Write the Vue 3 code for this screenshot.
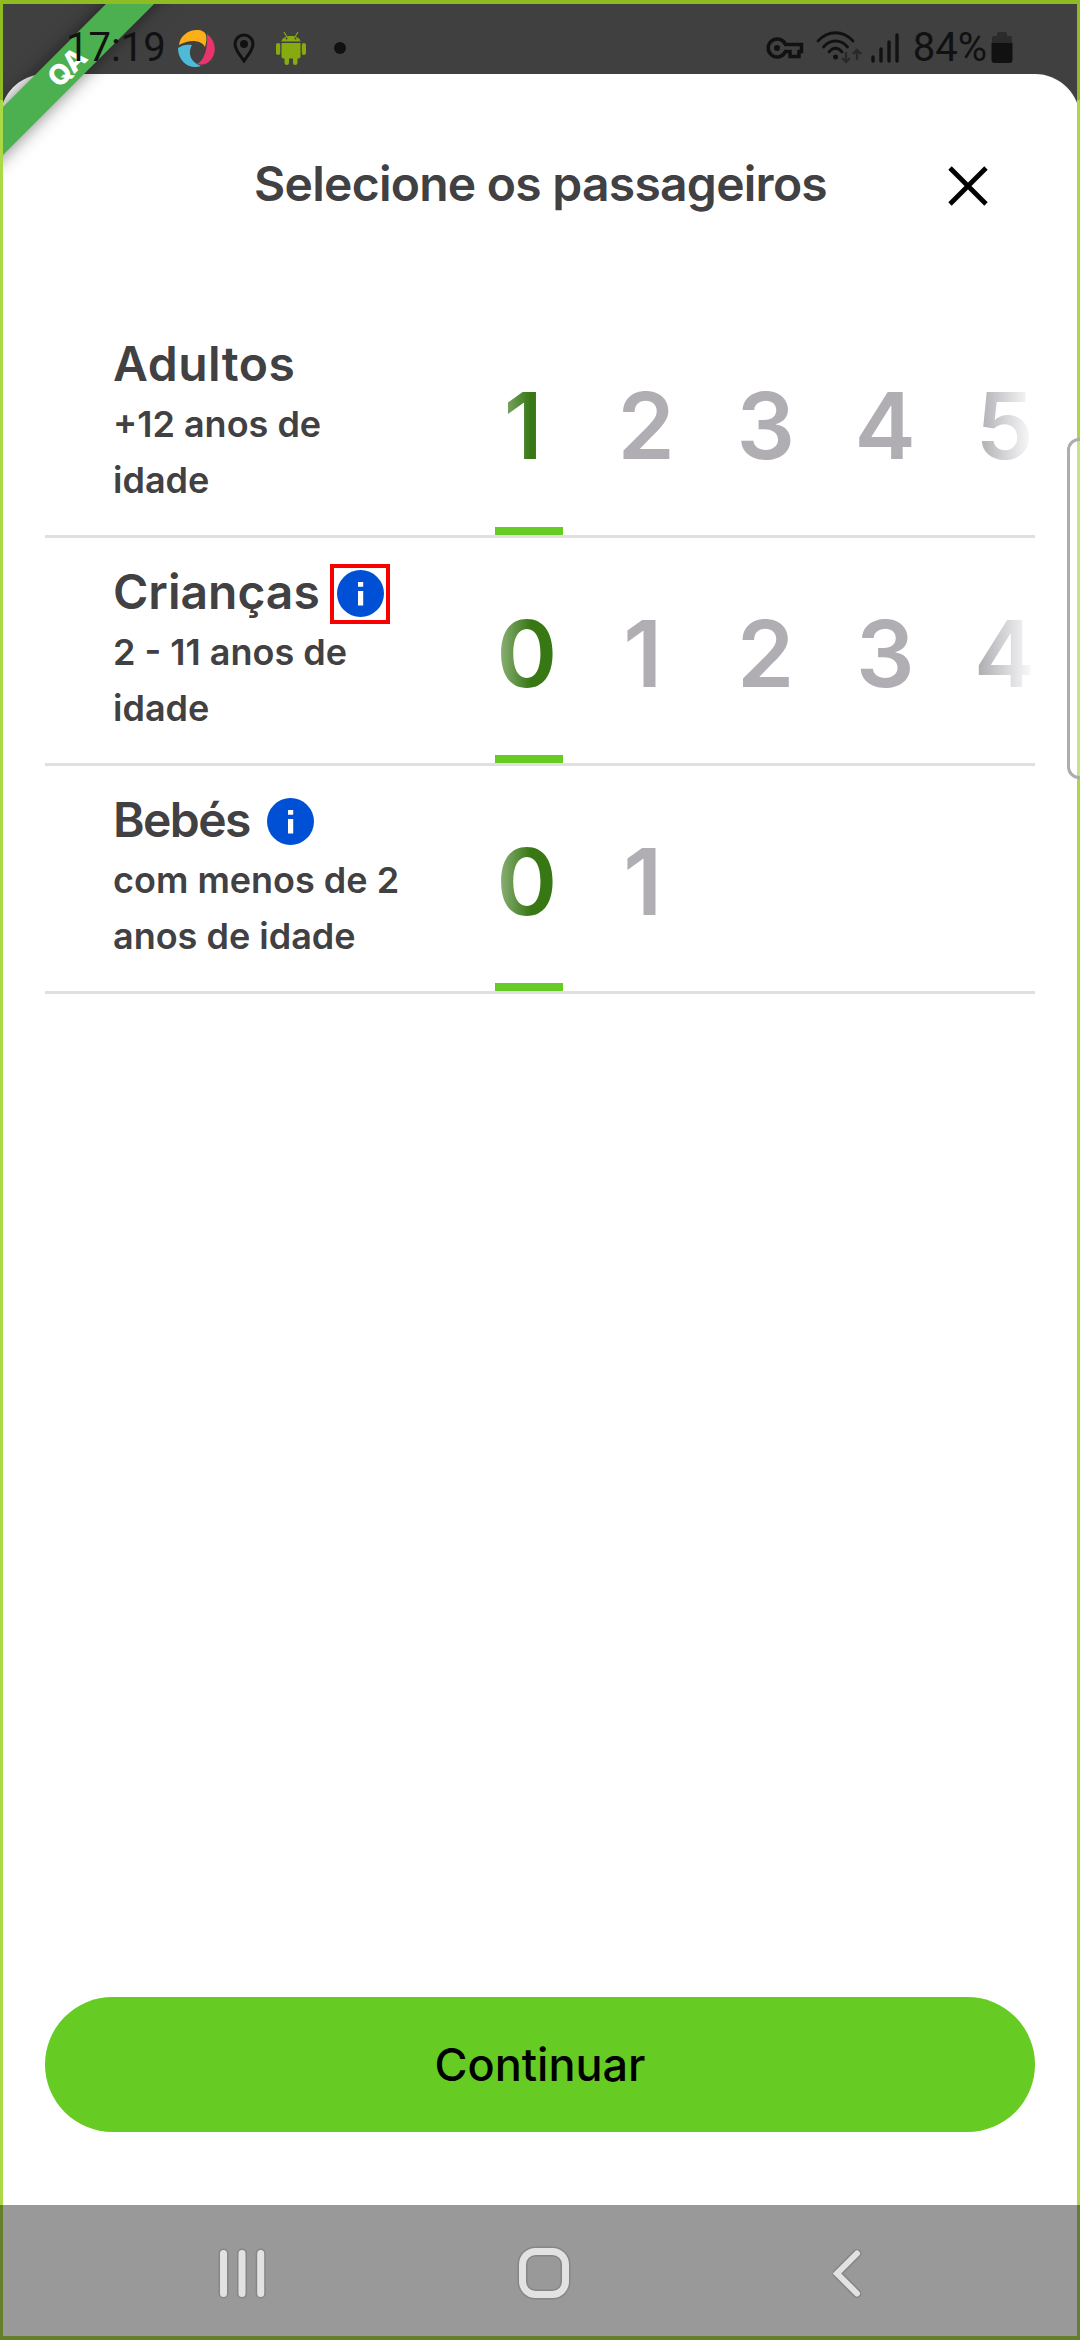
<script setup>
const rows = [
  { title: 'Adultos', lines: ['+12 anos de', 'idade'], info: false, marked: false, values: [1, 2, 3, 4, 5], key: 'adults' },
  { title: 'Crianças', lines: ['2 - 11 anos de', 'idade'], info: true, marked: true, values: [0, 1, 2, 3, 4], key: 'children' },
  { title: 'Bebés', lines: ['com menos de 2', 'anos de idade'], info: true, marked: false, values: [0, 1], key: 'babies' },
]
</script>

<template>
  <div class="screen">
    <div class="ribbon-clip"><div class="ribbon">QA</div></div>

    <div class="status">
      <div class="status-left">
        <span class="clock">17:19</span>
        <svg class="swirl" width="37" height="37" viewBox="0 0 37 37">
          <path d="M1 15C2 6 10 0 19 0c5 0 8 2 9 5 1 4 0 8-1 12C23 10 12 9 1 15z" fill="#fdaf17" />
          <path d="M29 4c7 5 9 13 7 20-3 9-10 12-17 10 7-4 11-14 10-30z" fill="#e8336d" />
          <path d="M0 18c4-3 9-4 14-3-4 7-3 16 9 21-11 4-23-4-23-18z" fill="#4fb9d8" />
        </svg>
        <svg class="pin" width="22" height="30" viewBox="0 0 22 30">
          <path d="M11 2C6 2 2 6 2 11c0 6 5 11 9 17 4-6 9-11 9-17 0-5-4-9-9-9z" fill="none" stroke="#111" stroke-width="3" />
          <circle cx="11" cy="11" r="4" fill="#111" />
        </svg>
        <svg class="droid" width="30" height="34" viewBox="0 0 30 34">
          <g fill="#86aa10">
            <path d="M5.500 10.500C6 3 24 3 24.500 10.500z" />
            <path d="M5.500 12h19v13.500a2 2 0 0 1-2 2h-15a2 2 0 0 1-2-2z" />
            <rect x="0" y="12" width="4.200" height="12" rx="2.100" />
            <rect x="25.800" y="12" width="4.200" height="12" rx="2.100" />
            <rect x="8.500" y="24" width="4.500" height="10" rx="2.200" />
            <rect x="17" y="24" width="4.500" height="10" rx="2.200" />
          </g>
          <path d="M8 1l3 5M22 1l-3 5" stroke="#86aa10" stroke-width="1.200" />
          <circle cx="10.500" cy="7.500" r="1" fill="#404040" /><circle cx="19.500" cy="7.500" r="1" fill="#404040" />
        </svg>
        <span class="dot"></span>
      </div>
      <div class="status-right">
        <svg class="key" width="38" height="22" viewBox="0 0 38 22">
          <path d="M19.500 7.500A9 9 0 1 0 19.500 14.500H24v5h9v-5h2.500v-7z" fill="none" stroke="#111" stroke-width="3.500" />
          <circle cx="11" cy="11" r="3" fill="#111" />
        </svg>
        <svg class="wifi" width="46" height="34" viewBox="0 0 46 34">
          <g fill="none" stroke="#111" stroke-width="2.800" stroke-linecap="round">
            <path d="M2 10C12-1 27-1 37 10" /><path d="M7.500 16C14 8 25 8 31.500 16" /><path d="M13 21C17 16 22 16 26 21" />
          </g>
          <circle cx="19.500" cy="26" r="2.500" fill="#111" />
          <path d="M30 21v10m-4-4l4 4 4-4M41 29V19m-4 4l4-4 4 4" fill="none" stroke="#292929" stroke-width="2.400" />
        </svg>
        <svg class="bars" width="28" height="30" viewBox="0 0 28 30">
          <path d="M2 24v4M10 16v12M18 9v19M26 2v26" stroke="#111" stroke-width="3.400" stroke-linecap="round" />
        </svg>
        <span class="percent">84%</span>
        <svg class="battery" width="22" height="32" viewBox="0 0 22 32">
          <path d="M1 11V6q0-2 2-2h3V2q0-2 2-2h6q2 0 2 2v2h3q2 0 2 2v5z" fill="#2b2b2b" />
          <path d="M.5 11h21v17q0 3-3 3h-15q-3 0-3-3z" fill="#111" />
        </svg>
      </div>
    </div>

    <main class="sheet">
      <header class="head">
        <h1>Selecione os passageiros</h1>
        <svg class="close" width="40" height="40" viewBox="0 0 40 40"><path d="M2 2l36 36M38 2L2 38" stroke="#000" stroke-width="4.800" /></svg>
      </header>

      <section v-for="row in rows" :key="row.key" class="row">
        <div class="label">
          <div class="name">
            <span :class="['word', row.key]">{{ row.title }}</span>
            <span v-if="row.info" :class="['info-box', { marked: row.marked }]">
              <svg width="47" height="47" viewBox="0 0 47 47">
                <circle cx="23.500" cy="23.500" r="23.500" fill="#0050d5" />
                <path d="M21 12h5.200v4.800H21zM21 21h5.200v14.500H21z" fill="#fff" />
              </svg>
            </span>
          </div>
          <div v-for="line in row.lines" :key="line" class="sub">{{ line }}</div>
        </div>
        <div class="picker">
          <div class="values">
            <span v-for="(v, i) in row.values" :key="v" :class="['value', { on: i === 0, one: v === 1 }]">{{ v }}</span>
          </div>
          <div class="bar"></div>
        </div>
      </section>

      <button class="go">Continuar</button>
    </main>

    <nav class="nav">
      <svg width="1080" height="135" viewBox="0 0 1080 135">
        <g fill="none" stroke-linecap="round" stroke-linejoin="round">
          <g stroke="#868686" stroke-width="10">
            <path d="M223.500 48.500v40M242 48.500v40M260.700 48.500v40" />
            <rect x="522.500" y="46.500" width="43" height="43" rx="13" />
            <path d="M857 48.500l-20 20 20 20" stroke-width="9" />
          </g>
          <g stroke="#e2e2e2" stroke-width="7">
            <path d="M223.500 48.500v40M242 48.500v40M260.700 48.500v40" />
            <rect x="522.500" y="46.500" width="43" height="43" rx="13" />
            <path d="M857 48.500l-20 20 20 20" stroke-width="6" stroke-linejoin="miter" />
          </g>
        </g>
      </svg>
    </nav>

    <div class="frame"></div>
    <div class="frame-status"></div>
    <div class="frame-nav"></div>
    <div class="edge-handle"></div>
  </div>
</template>

<style>
body { margin: 0; }
</style>

<style scoped>
.screen {
  position: relative;
  display: flex;
  flex-direction: column;
  width: 1080px;
  height: 2340px;
  overflow: hidden;
  background: #404040;
  font-family: Inter, "Liberation Sans", sans-serif;
  color: #414042;
}
.status {
  position: relative;
  z-index: 5;
  box-sizing: border-box;
  display: flex;
  justify-content: space-between;
  height: 74px;
  padding: 0 67px 0 66px;
  font: 40px/47px Roboto, sans-serif;
  color: #111;
}
.status-left, .status-right { display: flex; align-items: flex-start; }
.clock, .percent { margin-top: 24px; }
.swirl { margin: 30px 0 0 12px; }
.pin { margin: 33px 0 0 18px; }
.droid { margin: 31px 0 0 21px; }
.dot { width: 12px; height: 12px; margin: 42px 0 0 28px; border-radius: 50%; background: #111; }
.key { margin: 37px 12px 0 0; }
.wifi { margin: 31px 9px 0 0; }
.bars { margin: 33px 14px 0 0; }
.battery { margin: 32px 0 0 4px; }

.sheet {
  display: flex;
  flex: 1;
  flex-direction: column;
  padding: 0 45px;
  border-radius: 45px 45px 0 0;
  background: #fff;
}
.head {
  display: flex;
  align-items: flex-start;
  justify-content: flex-end;
  gap: 121px;
  height: 236px;
  padding-right: 47px;
}
h1 {
  margin: 79.5px 0 0;
  font-size: 48px;
  font-weight: 600;
  line-height: 60px;
  letter-spacing: -.74px;
  white-space: nowrap;
}
.close { margin-top: 92px; }

.row {
  box-sizing: border-box;
  display: flex;
  height: 228px;
  border-bottom: 3px solid #e0e0e0;
}
.label { width: 362px; padding: 23.5px 0 0 68px; box-sizing: border-box; }
.name {
  display: flex;
  align-items: center;
  height: 60px;
  margin-bottom: 2.5px;
  font-size: 48px;
  font-weight: 600;
}
.word { white-space: nowrap; }
.adults { letter-spacing: .5px; }
.babies { letter-spacing: -1.6px; }
.info-box { display: flex; padding: 2.5px; margin: 4px 0 0 10.5px; border: 4.5px solid transparent; }
.info-box.marked { border-color: #f80000; }
.sub { font-size: 36px; font-weight: 600; line-height: 56px; font-kerning: none; white-space: nowrap; }
.picker { display: flex; flex-direction: column; width: 628px; }
.values {
  display: flex;
  flex: 1;
  margin-left: 68px;
  padding-top: 69.5px;
  overflow: hidden;
  mask-image: linear-gradient(90deg, rgba(0, 0, 0, .25), #000 10%, #000 90%, transparent);
}
.value {
  flex: none;
  box-sizing: border-box;
  width: 119.5px;
  font-size: 92px;
  font-weight: 600;
  line-height: 92px;
  text-align: center;
  color: #b0aeb3;
}
.value.one { padding-right: 7px; }
.value.on { margin-left: -8px; color: #377714; }
.bar { width: 67.5px; height: 8px; margin-left: 88px; background: #66cb22; }

.go {
  height: 135px;
  margin-top: auto;
  margin-bottom: 73px;
  border: 0;
  border-radius: 68px;
  background: #66cb22;
  font: 450 45px/60px Inter, sans-serif;
  color: #000;
}
.nav { height: 135px; background: #999; }
.nav svg { display: block; }

.ribbon-clip { position: absolute; z-index: 3; inset: 0 auto auto 0; width: 230px; height: 230px; overflow: hidden; }
.ribbon {
  position: absolute;
  left: -83px;
  top: 50px;
  width: 300px;
  height: 34px;
  transform: rotate(-45deg);
  background: #4caf50;
  box-shadow: 0 0 18px rgba(0, 0, 0, .5);
  font: 800 28px/34px Inter, sans-serif;
  text-align: center;
  color: #fff;
}
.frame, .frame-status, .frame-nav { position: absolute; z-index: 4; box-sizing: border-box; pointer-events: none; }
.frame { inset: 100px 0 135px; border: solid #abd845; border-width: 0 3.500px; }
.frame-status { inset: 0 0 auto; height: 100px; border: solid #8fbc22; border-width: 4px 3px 0; }
.frame-nav { inset: auto 0 0; height: 135px; border: solid #667f2c; border-width: 0 3px 4px; }
.edge-handle {
  position: absolute;
  z-index: 6;
  left: 1067px;
  top: 438px;
  box-sizing: border-box;
  width: 26px;
  height: 341px;
  border: 3px solid #adadad;
  border-radius: 12px;
  background: rgba(255, 255, 255, .35);
}
</style>
